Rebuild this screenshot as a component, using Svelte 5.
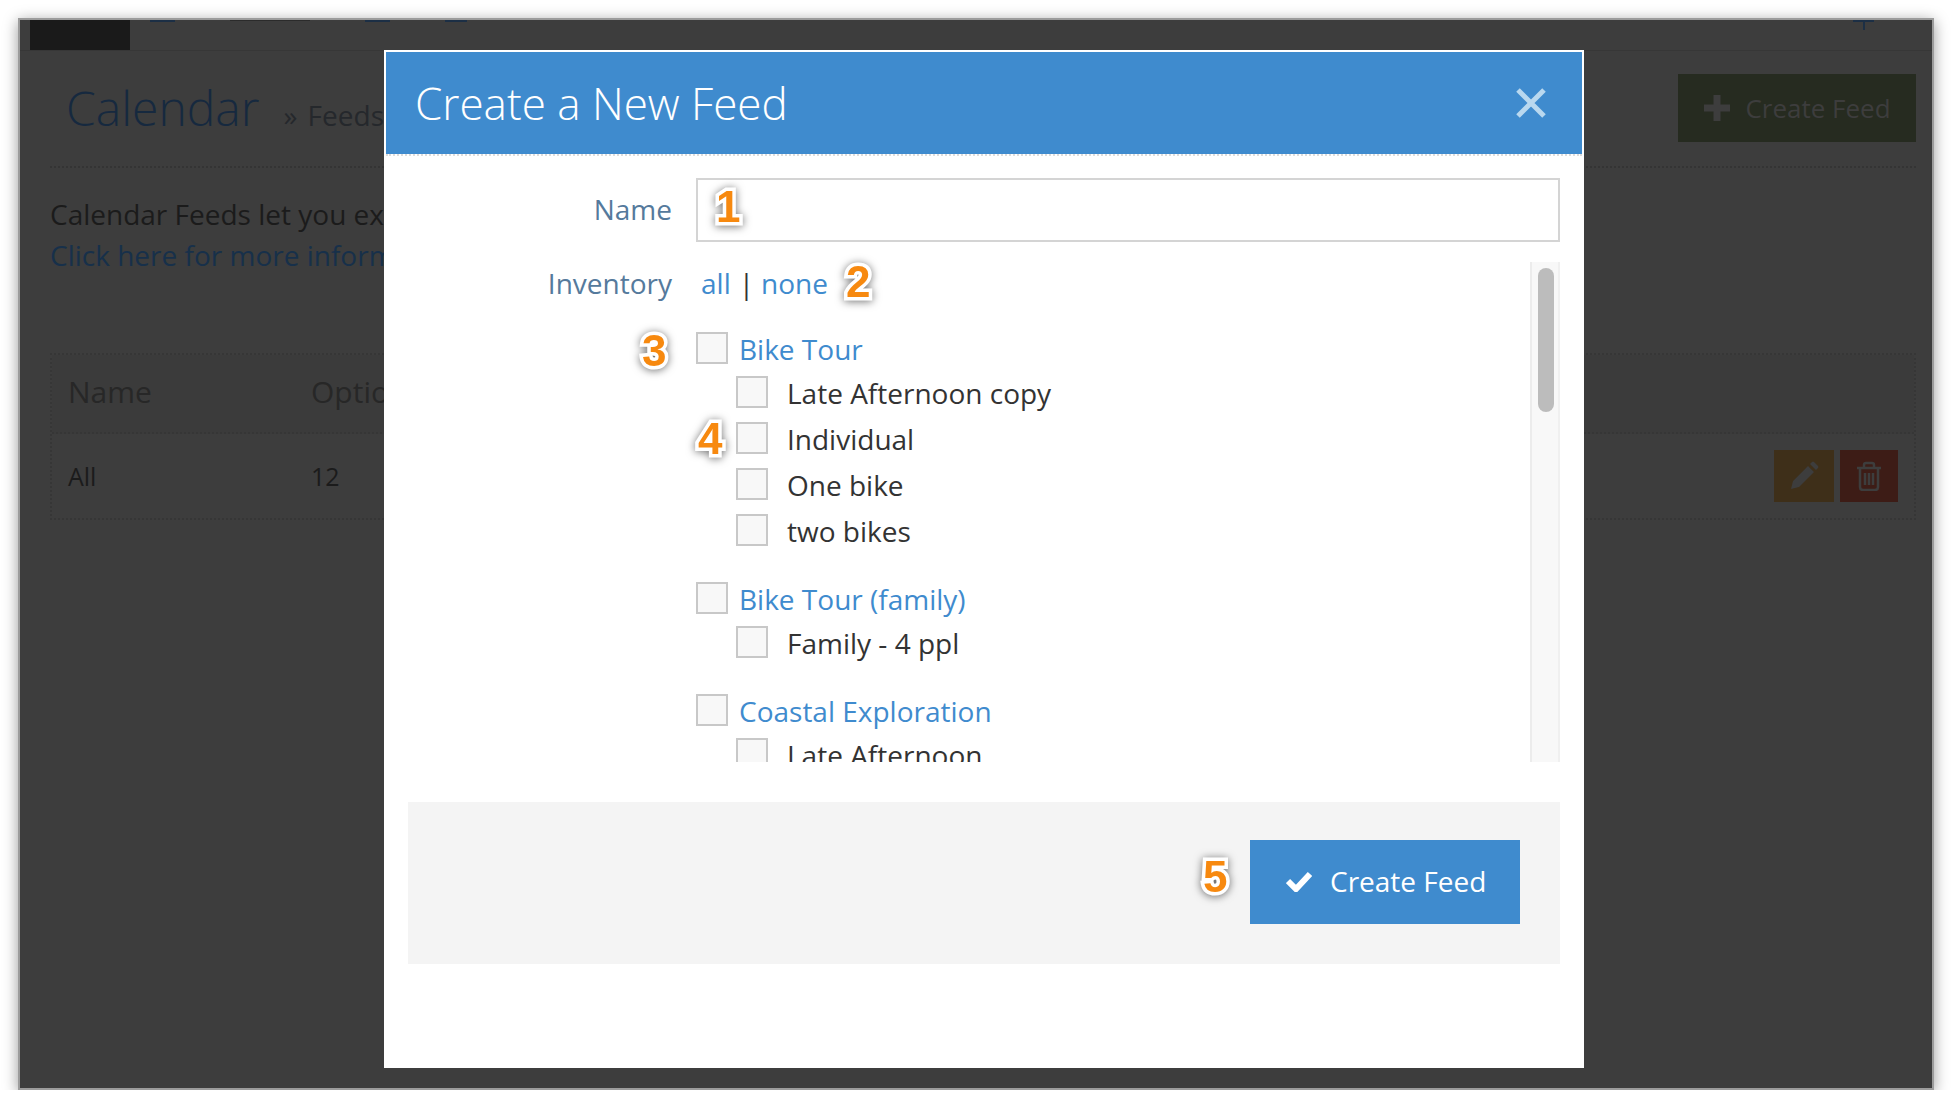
<script>
	const groups = [
		{ name: 'Bike Tour', options: ['Late Afternoon copy', 'Individual', 'One bike', 'two bikes'] },
		{ name: 'Bike Tour (family)', options: ['Family - 4 ppl'] },
		{ name: 'Coastal Exploration', options: ['Late Afternoon'] }
	];

	// callout numbers sit on top of the form, offsets are from the modal corner
	const callouts = [
		{ n: 1, x: 332, y: 135 },
		{ n: 2, x: 462, y: 210 },
		{ n: 3, x: 258, y: 279 },
		{ n: 4, x: 314, y: 367 },
		{ n: 5, x: 819, y: 805 }
	];
</script>

<div class="frame">
	<div class="topbar">
		<div class="logo"></div>
		<span class="tick" style="width: 25px"></span>
		<span class="tick faint" style="width: 80px"></span>
		<span class="tick" style="width: 25px"></span>
		<span class="tick" style="width: 22px"></span>
		<div class="plus-stub"></div>
	</div>

	<div class="page">
		<div class="page-head">
			<h1>Calendar</h1>
			<span class="crumb">» Feeds</span>
			<button class="new-feed">
				<svg width="28" height="28" viewBox="0 0 28 28"><path d="M10.5 1h7v9.500h9.500v7h-9.500v9.500h-7v-9.500h-9.500v-7h9.500z" fill="#3d3d3d" /></svg>
				Create Feed
			</button>
		</div>

		<p class="intro">Calendar Feeds let you export your calendar</p>
		<a class="more" href="#more">Click here for more information</a>

		<div class="feeds">
			<div class="feeds-head">
				<span class="col-name">Name</span>
				<span>Options</span>
			</div>
			<div class="feeds-row">
				<span class="col-name">All</span>
				<span>12</span>
				<div class="actions">
					<span class="act edit">
						<svg width="30" height="30" viewBox="0 0 30 30"><path d="M2 28l2-8L19 5l6 6-15 15zM21 3l2-2q1-.8 2 0l4 4q.8 1 0 2l-2 2z" fill="#3d3d3d" /></svg>
					</span>
					<span class="act del">
						<svg width="26" height="30" viewBox="0 0 26 30" fill="none" stroke="#3d3d3d" stroke-width="2.500"><path d="M1 7h24M4 7v19q0 3 3 3h12q3 0 3-3V7M8 7V4q0-2 2-2h6q2 0 2 2v3M9 12v12M13 12v12M17 12v12" /></svg>
					</span>
				</div>
			</div>
		</div>
	</div>

	<div class="modal">
		<div class="modal-head">
			<h2>Create a New Feed</h2>
			<svg class="close" width="30" height="30" viewBox="0 0 30 30"><path d="M2 2l26 26M28 2L2 28" stroke="#b9d8ef" stroke-width="5" /></svg>
		</div>

		<div class="form">
			<label class="field-label" for="feed-name">Name</label>
			<input id="feed-name" class="name-input" type="text" />

			<div class="field-label inv-label">Inventory</div>
			<div class="inventory">
				<div class="list">
					<div class="pick">
						<a href="#all">all</a><span class="sep">|</span><a href="#none">none</a>
					</div>
					<div class="groups">
						{#each groups as group}
							<div class="group">
								<div class="row">
									<span class="check"></span>
									<a class="group-name" href="#group">{group.name}</a>
								</div>
								{#each group.options as option}
									<div class="row sub">
										<span class="check"></span>
										<span class="option">{option}</span>
									</div>
								{/each}
							</div>
						{/each}
					</div>
				</div>
				<div class="track"><div class="thumb"></div></div>
			</div>
		</div>

		<div class="modal-foot">
			<button class="submit">
				<svg width="26" height="22" viewBox="0 0 26 22"><path d="M2 11l8 8L24 4" fill="none" stroke="#fff" stroke-width="6" /></svg>
				Create Feed
			</button>
		</div>

		{#each callouts as c}
			<span class="callout" style="left: {c.x}px; top: {c.y}px">{c.n}</span>
		{/each}
	</div>
</div>

<style>
	:global(body) {
		background: #fff;
		font-family: "Open Sans", sans-serif;
	}

	.frame {
		position: relative;
		box-sizing: border-box;
		width: 1916px;
		height: 1072px;
		margin: 18px 0 0 18px;
		border: 2px solid #9c9c9c;
		background: #3d3d3d;
		box-shadow: 0 3px 14px rgba(0, 0, 0, 0.4);
		overflow: hidden;
		color: #1b1b1b;
	}

	.topbar {
		display: flex;
		align-items: flex-start;
		height: 30px;
		padding-left: 10px;
		border-bottom: 1px solid #373737;
	}

	.logo {
		width: 100px;
		height: 30px;
		background: #1a1a1a;
		margin-right: 20px;
	}

	.tick {
		height: 2px;
		background: #1c2f45;
		margin-right: 55px;
	}

	.tick.faint {
		height: 1px;
		background: #2b2b2b;
	}

	.plus-stub {
		width: 21px;
		height: 2px;
		margin-left: auto;
		margin-right: 58px;
		background: #1c2f45;
		position: relative;
	}

	.plus-stub::after {
		content: '';
		position: absolute;
		left: 10px;
		top: 0;
		width: 2px;
		height: 10px;
		background: #1c2f45;
	}

	.page {
		padding: 0 16px 0 30px;
	}

	.page-head {
		display: flex;
		align-items: flex-start;
		height: 115px;
		border-bottom: 2px dotted #343434;
	}

	h1 {
		margin: 23px 0 0 16px;
		font-size: 48px;
		line-height: 68px;
		font-weight: 300;
		color: #16293f;
	}

	.crumb {
		margin: 42px 0 0 24px;
		font-size: 28px;
		line-height: 44px;
		word-spacing: 3px;
		color: #25282c;
	}

	.new-feed {
		display: flex;
		align-items: center;
		justify-content: center;
		gap: 14px;
		width: 238px;
		height: 68px;
		margin: 23px 0 0 auto;
		border: 0;
		background: #262b20;
		color: #3d3d3d;
		font: 26px "Open Sans", sans-serif;
	}

	.intro {
		margin: 25px 0 0;
		font-size: 28px;
		line-height: 42px;
	}

	.more {
		display: block;
		margin-top: -1px;
		font-size: 28px;
		line-height: 42px;
		color: #17304a;
		text-decoration: none;
	}

	.feeds {
		margin-top: 77px;
		border: 2px dotted #363636;
		height: 167px;
		box-sizing: border-box;
	}

	.feeds-head,
	.feeds-row {
		display: flex;
		align-items: center;
		box-sizing: border-box;
	}

	.feeds-head {
		height: 79px;
		padding-bottom: 4px;
		font-size: 30px;
		color: #272727;
		border-bottom: 2px dotted #363636;
		background: #3b3b3b;
	}

	.feeds-row {
		height: 84px;
		font-size: 25px;
	}

	.col-name {
		width: 243px;
		margin-left: 16px;
	}

	.actions {
		display: flex;
		gap: 6px;
		margin-left: auto;
		margin-right: 16px;
	}

	.act {
		display: flex;
		align-items: center;
		justify-content: center;
		height: 52px;
	}

	.edit {
		width: 60px;
		background: #3e2f19;
	}

	.del {
		width: 58px;
		background: #3d1c16;
	}

	.modal {
		position: absolute;
		left: 364px;
		top: 30px;
		width: 1200px;
		height: 1018px;
		background: #fff;
	}

	.modal-head {
		display: flex;
		align-items: center;
		justify-content: space-between;
		box-sizing: border-box;
		height: 104px;
		margin: 2px 2px 0;
		padding: 0 36px 0 29px;
		background: #3f8bce;
		border-bottom: 2px dotted #dcdcdc;
		background-clip: padding-box;
	}

	h2 {
		margin: 0;
		font-size: 44px;
		font-weight: 300;
		color: #fff;
	}

	.form {
		display: grid;
		grid-template-columns: 264px 864px;
		column-gap: 24px;
		padding: 22px 24px 0;
		font-size: 28px;
	}

	.field-label {
		text-align: right;
		color: #557a9c;
		line-height: 62px;
	}

	.inv-label {
		margin-top: 19px;
		line-height: 44px;
	}

	.name-input {
		box-sizing: border-box;
		height: 64px;
		width: 100%;
		border: 2px solid #d4d4d4;
		background: #fff;
	}

	.inventory {
		display: flex;
		height: 500px;
		margin-top: 20px;
		overflow: hidden;
	}

	.list {
		flex: 1;
		overflow: hidden;
	}

	.pick {
		display: flex;
		line-height: 42px;
		padding-left: 5px;
		color: #333;
	}

	.pick a {
		color: #3f8bce;
		text-decoration: none;
	}

	.sep {
		margin: 0 7px 0 8px;
	}

	.groups {
		display: flex;
		flex-direction: column;
		gap: 36px;
		margin-top: 28px;
	}

	.group {
		display: flex;
		flex-direction: column;
		gap: 14px;
	}

	.row {
		display: flex;
		align-items: center;
		height: 32px;
	}

	.row.sub {
		padding-left: 40px;
	}

	.row.sub:nth-child(2) {
		margin-top: -2px;
	}

	.check {
		flex: none;
		box-sizing: border-box;
		width: 32px;
		height: 32px;
		border: 2px solid #c8c8c8;
		background: #f8f8f8;
	}

	.group-name {
		margin: 1px 0 0 11px;
		color: #3f8bce;
		text-decoration: none;
	}

	.option {
		margin: 2px 0 0 19px;
		color: #333;
	}

	.track {
		box-sizing: border-box;
		width: 30px;
		padding: 6px 6px 0;
		background: #f8f8f8;
		border-left: 2px solid #ececec;
		border-right: 2px solid #f0f0f0;
	}

	.thumb {
		width: 16px;
		height: 144px;
		border-radius: 8px;
		background: #bcbcbc;
	}

	.modal-foot {
		display: flex;
		align-items: flex-start;
		justify-content: flex-end;
		box-sizing: border-box;
		height: 162px;
		margin: 40px 24px 0;
		padding: 38px 40px 0 0;
		background: #f4f4f4;
	}

	.submit {
		display: flex;
		align-items: center;
		gap: 18px;
		box-sizing: border-box;
		width: 270px;
		height: 84px;
		padding: 0 0 2px 36px;
		border: 0;
		background: #3f8bce;
		color: #fff;
		font: 28px "Open Sans", sans-serif;
	}

	.callout {
		position: absolute;
		font: bold 44px/1 "Liberation Sans", sans-serif;
		color: #f7890f;
		-webkit-text-stroke: 7px #fff;
		paint-order: stroke fill;
		filter: drop-shadow(0 1px 4px rgba(0, 0, 0, 0.55));
	}
</style>
